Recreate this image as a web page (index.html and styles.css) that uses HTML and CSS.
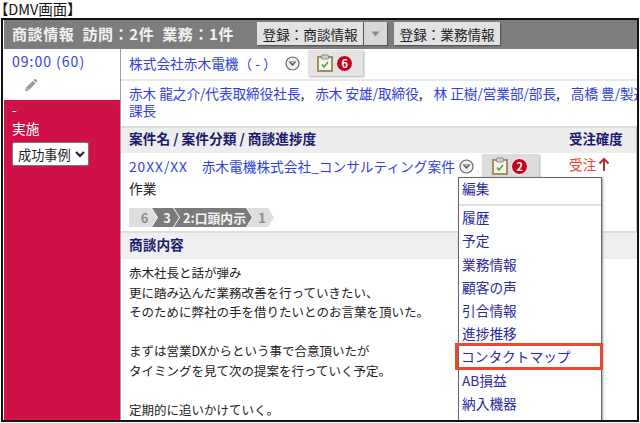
FILE: index.html
```html
<!DOCTYPE html>
<html lang="ja">
<head>
<meta charset="utf-8">
<title>DMV画面</title>
<link rel="stylesheet" href="styles.css">
</head>
<body>
<div class="title">【DMV画面】</div>
<div class="frame">
  <header class="bar">
    <span class="bar-title">商談情報</span>
    <span class="bar-title">訪問：2件</span>
    <span class="bar-title">業務：1件</span>
    <div class="bar-actions">
      <span class="btn btn-main">登録：商談情報</span>
      <span class="btn btn-arrow"><svg width="9" height="6" viewBox="0 0 9 6"><path d="M0.5 0.5h8L4.5 5.500z" fill="#8a8a8a"/></svg></span>
      <span class="btn btn-second">登録：業務情報</span>
    </div>
  </header>
  <div class="content">
    <aside class="side">
      <div class="side-top">
        <a class="link link-time">09:00 (60)</a>
        <svg class="pencil" width="15" height="15" viewBox="0 0 15 15"><path d="M2 13.200l.8-3.400 7-7 2.600 2.600-7 7z" fill="#9a9a9a"/><path d="M10.600 2l.9-.8a1 1 0 0 1 1.300 0l1 1a1 1 0 0 1 0 1.300l-.8.9z" fill="#8a8a8a"/><path d="M3.500 10l2.600 2.600" stroke="#eee" stroke-width=".7"/></svg>
      </div>
      <div class="side-status">
        <div class="dash">-</div>
        <div>実施</div>
        <select class="case-select"><option>成功事例</option></select>
      </div>
    </aside>
    <main class="main">
      <div class="company">
        <a class="link">株式会社赤木電機（ - ）</a>
        <svg class="drop" width="15" height="15" viewBox="0 0 15 15"><circle cx="7.500" cy="7.500" r="6.500" fill="#f1f1f1" stroke="#666" stroke-width="1.200"/><path d="M3.500 5.500h8L7.500 10z" fill="#3a3ab0"/><path d="M4.500 5.500h6L7.500 8z" fill="#e8c32a"/></svg>
        <span class="task task-company">
          <svg class="clip" width="16" height="18" viewBox="0 0 16 18"><rect x="1" y="3" width="14" height="14" fill="#f6f5ee" stroke="#a68c62" stroke-width="2"/><rect x="4.500" y="1" width="7" height="4" rx="1" fill="#cfcfcf" stroke="#8c8c8c"/><path d="M5 10.500l2 2.500 4-5" fill="none" stroke="#46a046" stroke-width="1.500"/></svg>
          <span class="badge">6</span>
        </span>
      </div>
      <div class="contacts"><a class="link">赤木 龍之介/代表取締役社長</a><span class="sep">,</span><a class="link">赤木 安雄/取締役</a><span class="sep">,</span><a class="link">林 正樹/営業部/部長</a><span class="sep">,</span><a class="link">高橋 豊/製造部/<br>課長</a></div>
      <div class="table-head">
        <span class="col-name">案件名 / 案件分類 / 商談進捗度</span>
        <span class="col-rate">受注確度</span>
      </div>
      <div class="case">
        <div class="case-left">
          <div class="case-line">
            <a class="link"><span class="latin">20XX/XX</span>　赤木電機株式会社_コンサルティング案件</a>
            <svg class="drop" width="15" height="15" viewBox="0 0 15 15"><circle cx="7.500" cy="7.500" r="6.500" fill="#f1f1f1" stroke="#666" stroke-width="1.200"/><path d="M3.500 5.500h8L7.500 10z" fill="#3a3ab0"/><path d="M4.500 5.500h6L7.500 8z" fill="#e8c32a"/></svg>
            <span class="task task-case">
              <svg class="clip" width="16" height="18" viewBox="0 0 16 18"><rect x="1" y="3" width="14" height="14" fill="#f6f5ee" stroke="#a68c62" stroke-width="2"/><rect x="4.500" y="1" width="7" height="4" rx="1" fill="#cfcfcf" stroke="#8c8c8c"/><path d="M5 10.500l2 2.500 4-5" fill="none" stroke="#46a046" stroke-width="1.500"/></svg>
              <span class="badge">2</span>
            </span>
          </div>
          <div class="case-type">作業</div>
          <div class="steps">
            <span class="step step-first">6</span>
            <span class="step step-on">3</span>
            <span class="step step-on step-wide">2:口頭内示</span>
            <span class="step">1</span>
          </div>
        </div>
        <div class="case-rate">
          <span class="rate">受注</span>
          <svg width="12" height="15" viewBox="0 0 12 15"><path d="M6 14V2M1.500 6.500L6 2l4.500 4.500" fill="none" stroke="#b3302c" stroke-width="2"/></svg>
        </div>
      </div>
      <div class="section-head">商談内容</div>
      <div class="memo">赤木社長と話が弾み<br>更に踏み込んだ業務改善を行っていきたい、<br>そのために弊社の手を借りたいとのお言葉を頂いた。<br><br>まずは営業DXからという事で合意頂いたが<br>タイミングを見て次の提案を行っていく予定。<br><br>定期的に追いかけていく。</div>
      <nav class="menu">
        <div class="menu-item menu-edit">編集</div>
        <div class="menu-sep"></div>
        <div class="menu-item">履歴</div>
        <div class="menu-item">予定</div>
        <div class="menu-item">業務情報</div>
        <div class="menu-item">顧客の声</div>
        <div class="menu-item">引合情報</div>
        <div class="menu-item">進捗推移</div>
        <div class="menu-item menu-hit">コンタクトマップ</div>
        <div class="menu-item">AB損益</div>
        <div class="menu-item">納入機器</div>
      </nav>
    </main>
  </div>
</div>
</body>
</html>
```

FILE: styles.css
```css
* { box-sizing: border-box; }
html, body { margin: 0; padding: 0; height: 423px; overflow: hidden; background: #fff; }
body { font-family: "Noto Sans CJK JP", "Noto Sans", sans-serif; font-size: 13.7px; color: #222; }
.title { height: 18px; line-height: 17px; font-size: 14.5px; color: #111; font-feature-settings: "palt"; padding-left: 1px; }
.frame { margin-left: 1px; width: 638px; height: 404px; border: 2px solid #111; padding-left: 1px; overflow: hidden; display: flex; flex-direction: column; }
.bar { height: 29px; flex: none; background: #7d7d7d; display: flex; align-items: center; padding: 0 0 2px 8px; gap: 8px; }
.bar-title { color: #f2f2f2; font-weight: 700; font-size: 15px; line-height: 20px; white-space: nowrap; letter-spacing: .6px; }
.bar-actions { display: flex; gap: 1px; margin-left: 15px; }
.btn { height: 23px; background: #e2e2e2; color: #222; font-size: 13.6px; white-space: nowrap; box-shadow: 1px 1px 1px #555; display: flex; align-items: center; justify-content: center; }
.btn-main { width: 106px; }
.btn-arrow { width: 23px; background: #d8d8d8; }
.btn-second { width: 106px; margin-left: 6px; }
.content { flex: 1; display: flex; min-height: 0; }
.side { width: 117px; flex: none; display: flex; flex-direction: column; border-right: 1px solid #a0a0a0; }
.side-top { height: 51px; flex: none; background: #fff; padding: 2px 8px 0; }
.link { color: #2f3fe0; }
.link-time { font-size: 14px; letter-spacing: 1px; }
.pencil { display: block; margin: 7px 0 0 11px; }
.side-status { flex: 1; background: #cf1147; color: #fff; padding: 1px 8px; line-height: 20px; }
.dash { height: 17px; line-height: 17px; }
.case-select { display: block; margin-top: 4px; width: 77px; height: 24px; font: 13.2px "Noto Sans CJK JP", sans-serif; background: #fff; color: #222; border: 1px solid #767676; border-radius: 2px; padding: 0 0 0 1px; }
.main { flex: 1; min-width: 0; position: relative; overflow: hidden; }
.company { height: 32px; flex: none; border-bottom: 2px solid #e8e8e8; display: flex; align-items: center; padding-left: 8px; white-space: nowrap; padding-bottom: 2px; }
.company .drop { margin-left: 8px; }
.drop { flex: none; }
.task { display: flex; align-items: center; justify-content: center; gap: 3px; background: #e4e4e4; box-shadow: 1px 1px 2px #aaa; }
.task-company { width: 55px; height: 26px; margin-left: 8px; }
.task-case { width: 57px; height: 24px; margin-left: 8px; background: #dcdcdc; }
.badge { width: 17px; height: 17px; border-radius: 50%; background: #c8001e; color: #fff; border: 1px solid #fff; box-shadow: 0 0 0 1px #ddd; font-size: 11px; font-weight: 700; line-height: 15px; text-align: center; }
.contacts { height: 45px; padding: 4px 8px 0; line-height: 17px; color: #222; white-space: nowrap; overflow: hidden; font-size: 13.6px; }
.sep { margin-right: 11px; }
.table-head { height: 27px; background: #ededed; border-top: 2px solid #dcdcdc; border-right: 1px solid #c8c8c8; display: flex; align-items: center; font-weight: 700; color: #1a1a6e; padding: 0 0 5px 8px; }
.col-name { width: 440px; white-space: nowrap; }
.col-rate { white-space: nowrap; font-size: 13.4px; }
.case { height: 80px; display: flex; border-bottom: 2px solid #dedede; border-right: 1px solid #c8c8c8; }
.case-left { width: 448px; flex: none; padding-left: 8px; }
.latin { letter-spacing: 1px; }
.case-line { display: flex; align-items: center; height: 25px; white-space: nowrap; padding-top: 1px; }
.case-line .drop { margin-left: 4px; }
.case-type { height: 24px; line-height: 20px; }
.steps { display: flex; margin-top: 6px; height: 19px; }
.step { height: 19px; line-height: 19px; width: 27px; background: #dedede; color: #8a8a8a; font-weight: 700; font-size: 12.8px; text-align: center; margin-right: -5px; clip-path: polygon(0 0, calc(100% - 6px) 0, 100% 50%, calc(100% - 6px) 100%, 0 100%, 6px 50%); padding-left: 3px; white-space: nowrap; }
.step-first { clip-path: polygon(0 0, calc(100% - 6px) 0, 100% 50%, calc(100% - 6px) 100%, 0 100%); width: 28px; }
.step-on { background: #7b7b7b; color: #f4f4f4; }
.step-wide { width: 78px; }
.case-rate { padding-top: 1px; display: flex; align-items: center; align-self: flex-start; gap: 2px; line-height: 20px; }
.rate { color: #f0442c; }
.section-head { height: 26px; background: #efefef; font-weight: 700; color: #1a1a6e; padding-left: 8px; line-height: 22px; }
.memo { padding: 4px 8px 0; line-height: 19.5px; font-size: 12.5px; color: #222; white-space: nowrap; }
.menu { position: absolute; left: 337px; top: 128px; width: 144px; height: 260px; background: #fff; border: 1px solid #666; box-shadow: 1px 1px 2px #999; color: #2a2aa0; }
.menu-item { height: 23.3px; line-height: 20px; padding-left: 3px; white-space: nowrap; }
.menu-edit { height: 23px; }
.menu-sep { height: 2px; background: #e0e0e0; margin: 3px 0 1px; }
.menu-hit { outline: 3px solid #e8492f; outline-offset: -2px; height: 25px; line-height: 25px; margin: -3px -1px 1.300px -3px; padding-left: 5px; position: relative; }
```
